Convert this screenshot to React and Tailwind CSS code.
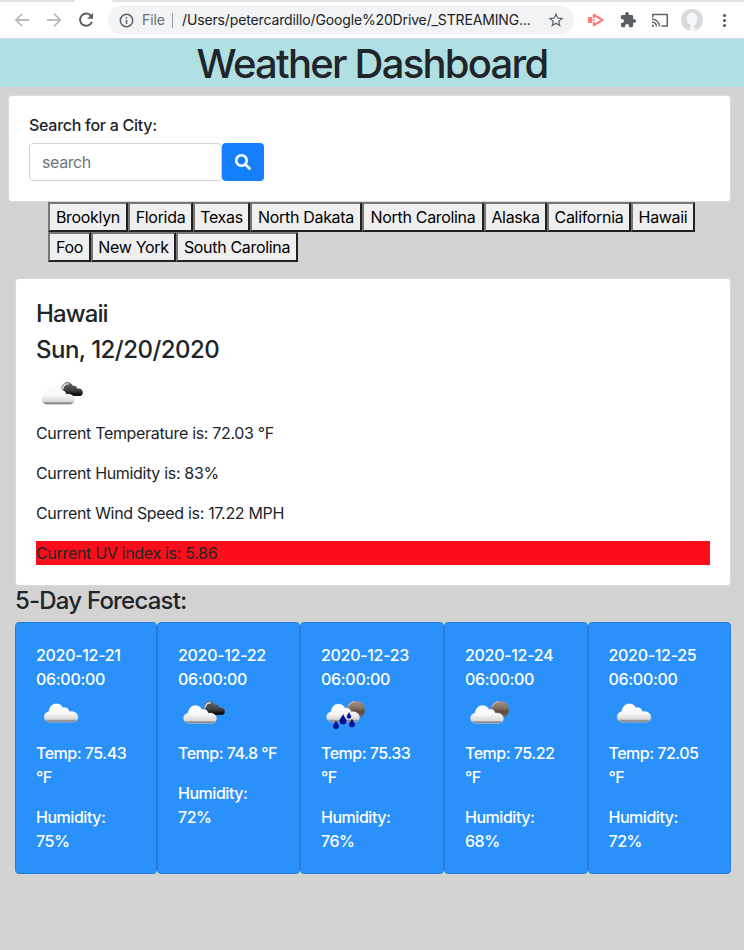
import React from 'react';

const cityRows = [
  [
    ['Brooklyn', 'w-[80px]'],
    ['Florida', 'w-[65px]'],
    ['Texas', 'w-[57px]'],
    ['North Dakata', 'w-[112px]'],
    ['North Carolina', 'w-[122px]'],
    ['Alaska', 'w-[63px]'],
    ['California', 'w-[84px]'],
    ['Hawaii', 'w-[64px]'],
  ],
  [
    ['Foo', 'w-[43px]'],
    ['New York', 'w-[85px]'],
    ['South Carolina', 'w-[122px]'],
  ],
];

const days = [
  { date: '2020-12-21', icon: 'cloud', temp: '75.43', humidity: '75%', width: 'w-[142px]' },
  { date: '2020-12-22', icon: 'broken', temp: '74.8', humidity: '72%', width: 'w-[143px]' },
  { date: '2020-12-23', icon: 'rain', temp: '75.33', humidity: '76%', width: 'w-[144px]' },
  { date: '2020-12-24', icon: 'moon', temp: '75.22', humidity: '68%', width: 'w-[143.5px]' },
  { date: '2020-12-25', icon: 'cloud', temp: '72.05', humidity: '72%', width: 'w-[143.5px]' },
];

const CLOUD =
  'M13.5 35.5C10.5 35.5 8 33 8 30.2C8 27.4 10 25.3 12.6 24.8C13 20.5 16 17 20 17C23.2 17 25.6 18.6 26.8 21.2C30 20.2 32.6 22 33.2 25C36.8 24.2 41.5 26 41.7 30C41.8 33.2 39.8 35.5 37 35.5Z';

function WeatherIcon({ kind, id }) {
  const cloudTransform =
    kind === 'cloud' ? 'translate(.2 -.3)' : kind === 'rain' ? 'translate(-2.2 .5) scale(.975)' : 'translate(-2.2 1.8) scale(.975)';
  return (
    <svg width="50" height="50" viewBox="0 0 50 50" className="block">
      <defs>
        <linearGradient id={`${id}-c`} x1="0" y1="0" x2="0" y2="1">
          <stop offset="0" stopColor="#fff" />
          <stop offset=".5" stopColor="#f8f8f8" />
          <stop offset=".84" stopColor="#d8d8d8" />
          <stop offset=".92" stopColor="#888" />
          <stop offset="1" stopColor="#8c8c8c" />
        </linearGradient>
        <linearGradient id={`${id}-d`} x1="0" y1="0" x2="0" y2="1">
          <stop offset="0" stopColor="#666" />
          <stop offset=".6" stopColor="#3c3c3c" />
          <stop offset=".85" stopColor="#111" />
        </linearGradient>
        <linearGradient id={`${id}-m`} x1="0" y1="0" x2="0" y2="1">
          <stop offset="0" stopColor="#a39488" />
          <stop offset=".35" stopColor="#8a7566" />
          <stop offset=".6" stopColor="#5f4b3e" />
          <stop offset="1" stopColor="#776255" />
        </linearGradient>
      </defs>
      {kind === 'broken' && (
        <g>
          <path
            d="M27 25C25.5 19 28 14.5 32.3 14.7C35 14.8 36.2 16.4 37 18C39.3 17.4 41 18.8 41.3 20.7C44.3 20.2 47 21.8 46.8 24.7C46.7 27 45.2 28.1 43 28.1H29Z"
            fill={`url(#${id}-d)`}
          />
          <path d="M25.600 20.500C26.600 15.500 29.700 13.500 33.500 14.700" fill="none" stroke="#777" strokeWidth="1" />
          <path d="M27 21C27.700 17 30 15.300 33 16" fill="none" stroke="#eee" strokeWidth="1.100" />
        </g>
      )}
      {(kind === 'rain' || kind === 'moon') && (
        <g>
          <circle cx="35.200" cy="22.800" r="8.800" fill={`url(#${id}-m)`} />
          <path d="M27 19.500A9 9 0 0 1 33.500 14.300" fill="none" stroke="#d1c7bf" strokeWidth="1" />
        </g>
      )}
      <path
        d={CLOUD}
        transform={cloudTransform}
        fill={`url(#${id}-c)`}
        stroke={id === 'main' ? '#dedede' : '#fff'}
        strokeWidth=".3"
      />
      {kind === 'rain' && (
        <g fill="#00109c" stroke="#00075e" strokeWidth=".4">
          <path d="M15 34C16 36.200 17.700 37.700 17.700 39.200A2.700 2.700 0 0 1 12.300 39.200C12.300 37.700 14 36.200 15 34Z" />
          <path d="M22 27.500C23.300 30.300 25.300 32.200 25.300 34A3.300 3.300 0 0 1 18.700 34C18.700 32.200 20.700 30.300 22 27.500Z" />
          <path d="M28 25.500C28.800 27.200 30 28.400 30 29.500A2 2 0 0 1 26 29.500C26 28.400 27.200 27.200 28 25.500Z" />
          <path d="M31 32.200C32 34.400 33.700 35.900 33.700 37.400A2.700 2.700 0 0 1 28.300 37.400C28.300 35.900 30 34.400 31 32.200Z" />
        </g>
      )}
    </svg>
  );
}

function BrowserBar() {
  return (
    <div className="h-[39px] bg-white border-b border-[#d5d9dc]">
      <div className="h-[2px] flex justify-between">
        <div className="w-[75px] bg-[#dee1e6] rounded-br-sm" />
        <div className="w-[632px] bg-[#dee1e6] rounded-bl-sm" />
      </div>
      <div className="h-[36px] flex items-center">
        <svg width="108" height="36" viewBox="0 2 108 36" className="shrink-0" fill="none">
          <path d="M29 20H16.5M22.3 13.7L16 20L22.3 26.3" stroke="#b9bbbe" strokeWidth="1.8" />
          <path d="M47 20H59.8M54 13.7L60.3 20L54 26.3" stroke="#b9bbbe" strokeWidth="1.8" />
          <path d="M91 15.9A6.1 6.1 0 1 0 91.9 21.8" stroke="#5b5e62" strokeWidth="2" />
          <path d="M93 13V18.8H87.2Z" fill="#5b5e62" />
        </svg>
        <div className="w-[466px] h-[28px] shrink-0 rounded-full bg-[#f1f3f4] flex items-center pl-[11px] text-[14px]">
          <svg width="15" height="15" viewBox="0 0 15 15" fill="none" stroke="#5f6368" strokeWidth="1.5">
            <circle cx="7.5" cy="7.5" r="6.2" />
            <path d="M7.5 6.8V11M7.5 4V5.5" />
          </svg>
          <span className="ml-[8px] w-[30px] text-[#6b6e72] tracking-[-0.1px]">File</span>
          <span className="w-px h-[15px] bg-[#9b9ea1]" />
          <span className="ml-[9px] w-[356px] whitespace-nowrap text-[#202124] tracking-[-0.14px]">
            /Users/petercardillo/Google%20Drive/_STREAMING...
          </span>
          <svg width="18" height="18" viewBox="0 0 24 24" className="ml-[9px]" fill="#5f6368">
            <path d="M22 9.24l-7.19-.62L12 2 9.19 8.63 2 9.24l5.46 4.73L5.82 21 12 17.27 18.18 21l-1.63-7.03L22 9.24zM12 15.4l-3.76 2.27 1-4.28-3.32-2.88 4.38-.38L12 6.1l1.71 4.04 4.38.38-3.32 2.88 1 4.28L12 15.4z" />
          </svg>
        </div>
        <svg width="170" height="36" viewBox="574 2 170 36" className="shrink-0">
          <path d="M588 17H592V23H588Z" fill="#fc7b7b" />
          <path d="M593.800 18V14.800L602.500 20L593.800 25.200V22" fill="none" stroke="#fc7b7b" strokeWidth="2.200" strokeLinejoin="round" />
          <path d="M592.600 18.300L595.500 20L592.600 21.700Z" fill="#fc7b7b" />
          <g transform="translate(619.500 11.300) scale(.72)" fill="#5b5e62">
            <path d="M20.5 11H19V7c0-1.1-.9-2-2-2h-4V3.500C13 2.120 11.880 1 10.500 1S8 2.120 8 3.500V5H4c-1.100 0-1.990.9-1.990 2v3.800H3.500c1.490 0 2.700 1.210 2.700 2.700s-1.210 2.700-2.700 2.700H2V20c0 1.100.9 2 2 2h3.800v-1.500c0-1.490 1.210-2.700 2.700-2.700s2.700 1.210 2.700 2.700V22H17c1.100 0 2-.9 2-2v-4h1.500c1.380 0 2.500-1.120 2.500-2.500S21.880 11 20.500 11z" />
          </g>
          <g fill="none" stroke="#5f6368" strokeWidth="1.5">
            <path d="M652.700 17.500V14.500H667.300V26H661.500" />
            <path d="M652 19A7.800 7.800 0 0 1 659.500 26.500M652 22A4.800 4.800 0 0 1 656.500 26.500" />
          </g>
          <path d="M652 24.500A2.200 2.200 0 0 1 654.200 26.700H652Z" fill="#5f6368" />
          <circle cx="692" cy="20" r="11" fill="#d8d9da" />
          <path d="M686.800 18.500A5.200 6 0 0 1 697.200 18.500C697.200 22 696 24 694.500 25.500V28L697 30A11 11 0 0 1 689 30.500L690.500 27V25C688 24 686.800 21.500 686.800 18.500Z" fill="#f5f8fb" />
          <g fill="#5b5e62">
            <circle cx="724.500" cy="15.500" r="1.600" />
            <circle cx="724.500" cy="20.500" r="1.600" />
            <circle cx="724.500" cy="25.500" r="1.600" />
          </g>
        </svg>
      </div>
    </div>
  );
}

export default function App() {
  return (
    <div className="w-[744px] h-[950px] overflow-hidden bg-[#d3d3d3] font-['Inter','Liberation_Sans',sans-serif] text-[16px] leading-[24px] tracking-[-0.32px] text-[#212529]">
      <BrowserBar />
      <h1 className="h-[48px] bg-[#b0e0e3] text-center text-[40px] leading-[50px] font-medium tracking-[-1.75px]">
        Weather Dashboard
      </h1>

      <section className="mt-[8px] ml-[8px] w-[723px] h-[107px] rounded-[4px] border border-[#dadada] bg-white px-[20px] pt-[17px]">
        <label htmlFor="city" className="block font-medium tracking-[-0.27px]">Search for a City:</label>
        <div className="mt-[6px] flex">
          <input
            id="city"
            placeholder="search"
            className="w-[193px] h-[38px] rounded-[4px] border border-[#ced4da] px-[12px] tracking-[-0.4px] placeholder:text-[#6c757d]"
          />
          <button aria-label="Search" className="w-[42px] h-[38px] rounded-[4px] bg-[#157ffb] flex items-center justify-center">
            <svg width="16" height="16" viewBox="0 0 512 512" fill="#fff">
              <path d="M505 442.700L405.300 343c-4.500-4.500-10.600-7-17-7H372c27.600-35.300 44-79.700 44-128C416 93.100 322.900 0 208 0S0 93.100 0 208s93.100 208 208 208c48.300 0 92.700-16.400 128-44v16.300c0 6.400 2.500 12.500 7 17l99.700 99.700c9.400 9.400 24.600 9.400 33.900 0l28.300-28.300c9.400-9.400 9.400-24.600.1-34zM208 336c-70.700 0-128-57.200-128-128 0-70.700 57.200-128 128-128 70.700 0 128 57.200 128 128 0 70.700-57.200 128-128 128z" />
            </svg>
          </button>
        </div>
      </section>

      <div className="ml-[48px] h-[76px]">
        {cityRows.map((row, i) => (
          <div key={i} className="flex">
            {row.map(([name, width]) => (
              <button
                key={name}
                className={`${width} h-[30px] flex items-center justify-center whitespace-nowrap border-2 border-t-[#767676] border-l-[#767676] border-r-[#212121] border-b-[#212121] bg-[#efefef] text-black`}
              >
                {name}
              </button>
            ))}
          </div>
        ))}
      </div>

      <section className="ml-[15px] w-[716px] h-[308px] rounded-[4px] border border-[#dadada] bg-white px-[20px] pt-[20px]">
        <h3 className="h-[36px] text-[24px] leading-[29px] font-medium tracking-[-0.9px]">Hawaii</h3>
        <h3 className="h-[33px] text-[24px] leading-[29px] font-medium tracking-[-0.53px]">Sun, 12/20/2020</h3>
        <div className="h-[53px]">
          <WeatherIcon kind="broken" id="main" />
        </div>
        <p className="mb-4">Current Temperature is: 72.03 °F</p>
        <p className="mb-4">Current Humidity is: 83%</p>
        <p className="mb-4">Current Wind Speed is: 17.22 MPH</p>
        <p className="bg-[#fc0d1b]">Current UV index is: 5.86</p>
      </section>

      <h3 className="ml-[15px] h-[36px] text-[24px] leading-[30px] font-medium tracking-[-0.8px]">5-Day Forecast:</h3>

      <div className="ml-[15px] flex text-white">
        {days.map((day) => (
          <article key={day.date} className={`${day.width} h-[252px] shrink-0 rounded-[4px] border border-[#247fdc] bg-[#2a91fb] px-[20px] pt-[20px]`}>
            <p className="h-[44px] font-medium tracking-[-0.3px]">
              {day.date}
              <br />
              06:00:00
            </p>
            <div className="h-[54px]">
              <WeatherIcon kind={day.icon} id={`d${day.date}`} />
            </div>
            <p className="mb-4 -mr-2 font-medium tracking-[-0.5px]">
              {day.temp === '74.8' ? 'Temp: 74.8 °F' : <>Temp: {day.temp}<br />°F</>}
            </p>
            <p className="font-medium tracking-[-0.46px]">Humidity:<br />{day.humidity}</p>
          </article>
        ))}
      </div>
    </div>
  );
}
